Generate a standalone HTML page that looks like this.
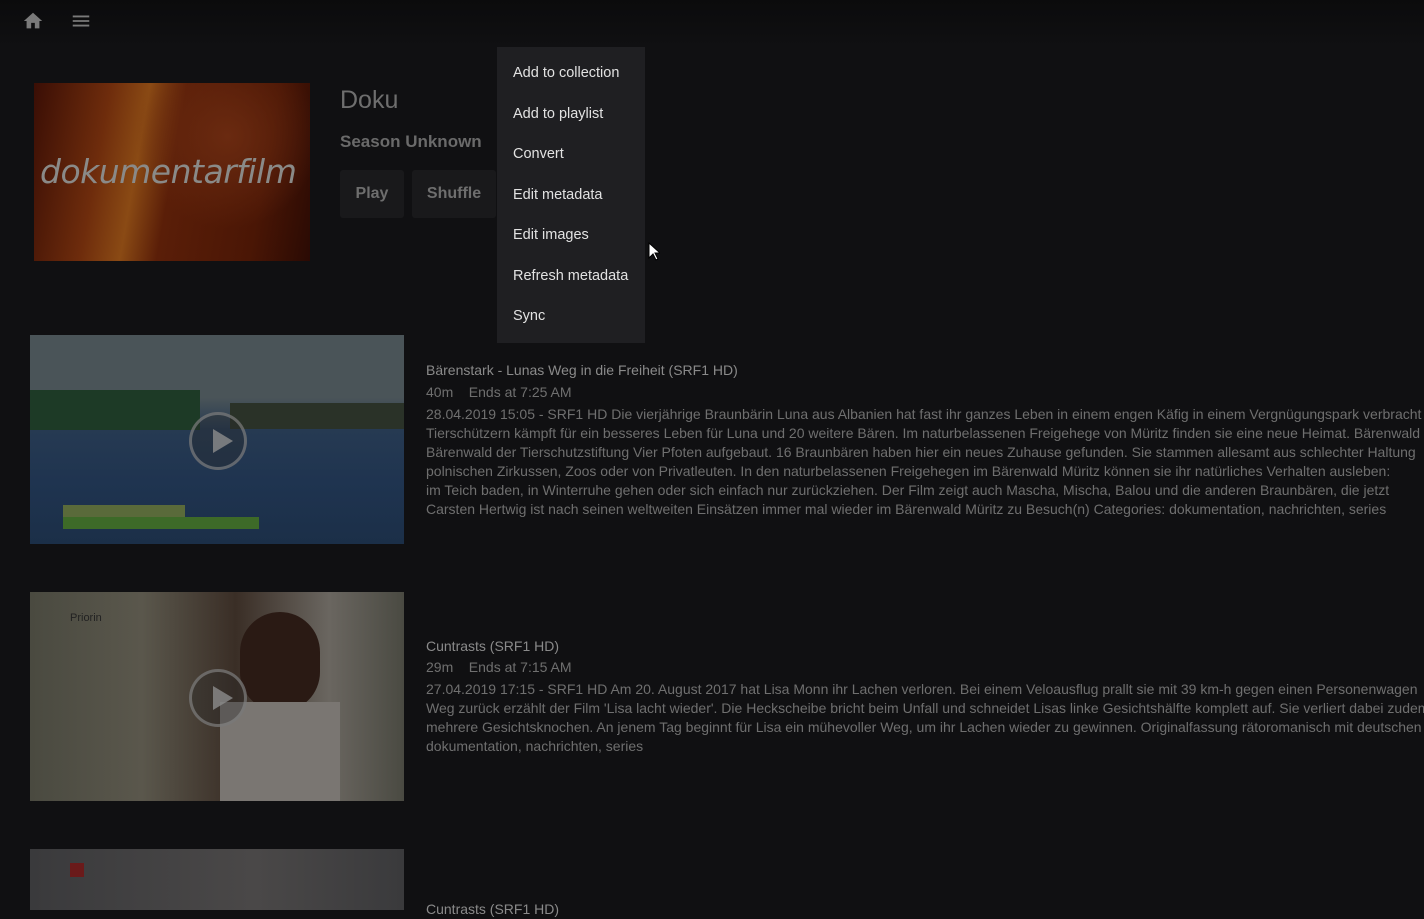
<!DOCTYPE html>
<html><head><meta charset="utf-8"><style>
body{margin:0;width:1424px;height:910px;overflow:hidden;background:#101012;font-family:"Liberation Sans",sans-serif;position:relative}
.a{position:absolute}
.t{color:#6f6f6f;font-size:14px;line-height:19px;white-space:nowrap}
.ep{position:absolute;left:30px;width:374px;height:209px;overflow:hidden}
.play{position:absolute;left:159px;top:77px;width:52px;height:52px;border:3px solid rgba(140,140,140,.6);border-radius:50%;background:rgba(40,40,40,.35)}
.play:after{content:"";position:absolute;left:21px;top:14px;border-left:20px solid rgba(140,140,140,.8);border-top:12px solid transparent;border-bottom:12px solid transparent}
.menu div{height:40.5px;line-height:40.5px;padding-left:16px;color:#e2e2e2;font-size:14.5px}
</style></head><body>
<div class="a" style="left:0;top:0;width:1424px;height:48px;background:linear-gradient(#0b0b0c,#101012)"></div>
<svg class="a" style="left:22px;top:10px" width="22" height="22" viewBox="0 0 24 24"><path d="M10 20v-6h4v6h5v-8h3L12 3 2 12h3v8z" fill="#7a7a7a"/></svg>
<svg class="a" style="left:70px;top:10px" width="22" height="22" viewBox="0 0 24 24"><path d="M3 18h18v-2H3zm0-5h18v-2H3zm0-7v2h18V6z" fill="#7a7a7a"/></svg>

<div class="a" style="left:34px;top:83px;width:276px;height:178px;background:radial-gradient(circle at 70% 30%,#6a2a10,transparent 40%),linear-gradient(100deg,#3a0e05 0%,#6e2c0c 25%,#8a4a14 38%,#5a1e08 50%,#4a1605 80%,#2a0a04 100%)"></div>
<div class="a" style="left:40px;top:152px;font-family:'DejaVu Sans',sans-serif;font-style:italic;font-size:33px;color:#8a8a88;letter-spacing:-0.5px">dokumentarfilm</div>

<div class="a" style="left:340px;top:86px;font-size:25px;color:#6e6e6e">Doku</div>
<div class="a" style="left:340px;top:132px;font-size:17px;color:#6a6a6a;font-weight:bold">Season Unknown</div>
<div class="a" style="left:340px;top:170px;width:64px;height:48px;background:#19191b;border-radius:3px;color:#6e6e6e;font-weight:bold;font-size:16px;line-height:48px;text-align:center">Play</div>
<div class="a" style="left:412px;top:170px;width:84px;height:48px;background:#19191b;border-radius:3px;color:#6e6e6e;font-weight:bold;font-size:16px;line-height:48px;text-align:center">Shuffle</div>

<div class="a menu" style="left:497px;top:47px;width:148px;height:296px;background:#1f1f22;padding-top:6px;box-sizing:border-box">
<div>Add to collection</div><div>Add to playlist</div><div>Convert</div><div>Edit metadata</div><div>Edit images</div><div>Refresh metadata</div><div>Sync</div></div>
<svg class="a" style="left:648px;top:242px" width="12" height="20" viewBox="0 0 12 20"><path d="M1 1v15l4-4 3 6 2-1-3-6h5z" fill="#fff" stroke="#000" stroke-width="1"/></svg>

<div class="ep" style="top:335px;background:linear-gradient(#4a5458 0%,#4a5458 30%,#263a52 45%,#1f3450 70%,#1b2f48 100%)">
<div class="a" style="left:0;top:55px;width:170px;height:40px;background:#1d3a26"></div>
<div class="a" style="left:200px;top:68px;width:174px;height:26px;background:#2a3228"></div>
<div class="a" style="left:33px;top:170px;width:122px;height:12px;background:#5a6a3a"></div>
<div class="a" style="left:33px;top:182px;width:196px;height:12px;background:#3d6a28"></div>
<div class="play"></div></div>

<div class="ep" style="top:592px;background:linear-gradient(90deg,#4a4a40 0%,#5a574c 30%,#3a2e26 55%,#6a6660 80%,#4a4a42 100%)">
<div class="a" style="left:210px;top:20px;width:80px;height:100px;border-radius:40px;background:#2a1a14"></div>
<div class="a" style="left:190px;top:110px;width:120px;height:100px;background:#7a7672"></div>
<div class="a" style="left:40px;top:20px;font-size:11px;color:#222">Priorin</div>
<div class="play"></div></div>

<div class="ep" style="top:849px;height:61px;background:linear-gradient(90deg,#3a3a3c,#4a4848 60%,#3a3a3c)">
<div class="a" style="left:40px;top:14px;width:14px;height:14px;background:#6a1a1a"></div></div>

<div class="a t" style="left:426px;top:361px;color:#8a8a8a">Bärenstark - Lunas Weg in die Freiheit (SRF1 HD)</div>
<div class="a t" style="left:426px;top:383px">40m&nbsp;&nbsp;&nbsp;&nbsp;Ends at 7:25 AM</div>
<div class="a t" style="left:426px;top:405px">28.04.2019 15:05 - SRF1 HD Die vierjährige Braunbärin Luna aus Albanien hat fast ihr ganzes Leben in einem engen Käfig in einem Vergnügungspark verbracht<br>Tierschützern kämpft für ein besseres Leben für Luna und 20 weitere Bären. Im naturbelassenen Freigehege von Müritz finden sie eine neue Heimat. Bärenwald<br>Bärenwald der Tierschutzstiftung Vier Pfoten aufgebaut. 16 Braunbären haben hier ein neues Zuhause gefunden. Sie stammen allesamt aus schlechter Haltung<br>polnischen Zirkussen, Zoos oder von Privatleuten. In den naturbelassenen Freigehegen im Bärenwald Müritz können sie ihr natürliches Verhalten ausleben: 
<br>im Teich baden, in Winterruhe gehen oder sich einfach nur zurückziehen. Der Film zeigt auch Mascha, Mischa, Balou und die anderen Braunbären, die jetzt<br>Carsten Hertwig ist nach seinen weltweiten Einsätzen immer mal wieder im Bärenwald Müritz zu Besuch(n) Categories: dokumentation, nachrichten, series</div>

<div class="a t" style="left:426px;top:637px;color:#8a8a8a">Cuntrasts (SRF1 HD)</div>
<div class="a t" style="left:426px;top:658px">29m&nbsp;&nbsp;&nbsp;&nbsp;Ends at 7:15 AM</div>
<div class="a t" style="left:426px;top:680px">27.04.2019 17:15 - SRF1 HD Am 20. August 2017 hat Lisa Monn ihr Lachen verloren. Bei einem Veloausflug prallt sie mit 39 km-h gegen einen Personenwagen<br>Weg zurück erzählt der Film 'Lisa lacht wieder'. Die Heckscheibe bricht beim Unfall und schneidet Lisas linke Gesichtshälfte komplett auf. Sie verliert dabei zudem<br>mehrere Gesichtsknochen. An jenem Tag beginnt für Lisa ein mühevoller Weg, um ihr Lachen wieder zu gewinnen. Originalfassung rätoromanisch mit deutschen<br>dokumentation, nachrichten, series</div>
<div class="a t" style="left:426px;top:900px;color:#8a8a8a">Cuntrasts (SRF1 HD)</div>
</body></html>
